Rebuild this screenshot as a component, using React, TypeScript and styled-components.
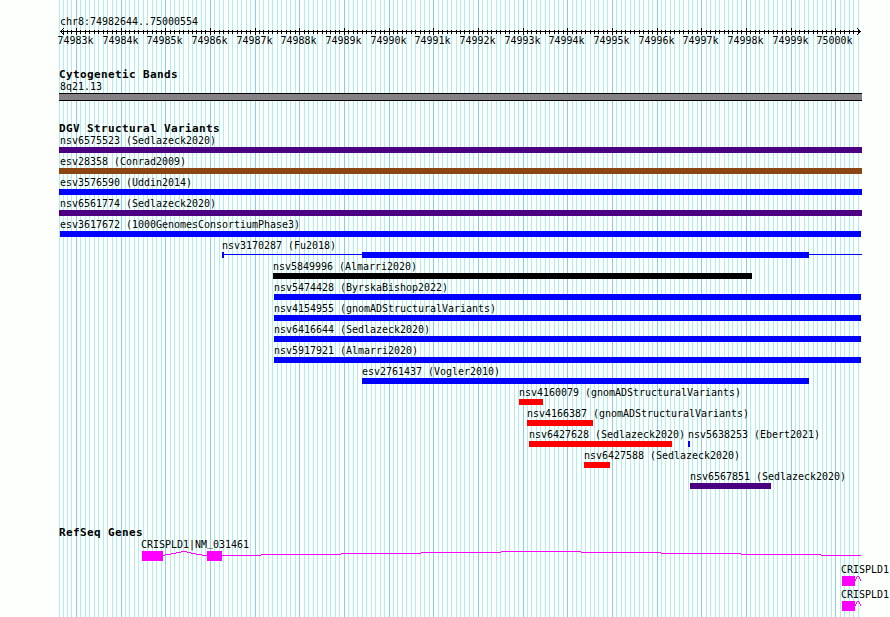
import styled, { createGlobalStyle } from "styled-components"

const START = 74982644
const END = 75000554
const LEFT = 60
const WIDTH = 800

const toX = (bp: number) => Math.max(59, Math.round(LEFT + (bp - START) * WIDTH / (END - START + 1)))

const ticks = Array.from({ length: 180 }, (_, i) => 74982600 + i * 100)
  .filter(bp => bp <= END)
  .map(bp => ({ bp, x: toX(bp), major: bp % 1000 === 0 }))

const color = {
  purple: "#4b0082",
  brown: "#8b4513",
  blue: "#0000ff",
  black: "#000000",
  red: "#ff0000",
  magenta: "#ff00ff",
}

const GlobalStyle = createGlobalStyle`
body {
  background: #fcfffc;
  margin: 0;
  overflow: hidden;
}
`

const Browser = styled.main`
color: #000;
display: flex;
flex-direction: column;
font-family: "DejaVu Sans Mono", monospace;
font-size: 11px;
height: 617px;
line-height: 12px;
overflow: hidden;
position: relative;
width: 890px;
`

const Grid = styled.svg`
height: 617px;
left: 0;
position: absolute;
top: 0;
width: 890px;
z-index: -1;
`

const Text = styled.span<{ $nudge?: number }>`
display: block;
height: 12px;
margin-left: ${props => props.$nudge ?? 0}px;
position: relative;
transform: scaleX(0.906);
transform-origin: 0 0;
white-space: pre;
width: max-content;
z-index: 1;
`

const Raised = styled.span`
position: relative;
top: -2px;
`

const Header = styled.header`
height: 49px;
padding: 16px 0 4px 60px;
`

const Axis = styled.svg`
display: block;
height: 21px;
margin-left: -60px;
width: 890px;
`

const Track = styled.section<{ $height: number }>`
flex: none;
height: ${props => props.$height}px;
`

const Title = styled.h2`
font-size: 11px;
font-weight: 700;
height: 12px;
letter-spacing: 0.38px;
line-height: 12px;
margin: 0 0 0 59px;
white-space: pre;
`

const Band = styled.div`
background: #848284;
border: solid #000;
border-width: 1px 0;
height: 6px;
margin-left: 59px;
width: 803px;
`

const BandLabel = styled.div`
padding-left: 60px;
`

const Row = styled.div`
display: flex;
height: 21px;
`

const Feature = styled.div<{ $indent: number; $width: number }>`
flex: none;
margin-left: ${props => props.$indent}px;
width: ${props => props.$width}px;
`

const Bar = styled.div<{ $color: string; $width?: number }>`
background: ${props => props.$color};
flex: none;
height: 6px;
width: ${props => props.$width ? `${props.$width}px` : "100%"};
`

const Segments = styled.div`
align-items: center;
display: flex;
`

const Connector = styled.div<{ $width: number }>`
background: ${color.blue};
flex: none;
height: 1px;
margin-bottom: 1px;
width: ${props => props.$width}px;
`

const Gene = styled.div<{ $indent: number }>`
height: 25px;
margin-left: ${props => props.$indent}px;
`

const GeneModel = styled.svg`
display: block;
height: 10px;
overflow: visible;
width: 720px;
`

type Variant = { name: string; from: number; to: number; fill: string; nudge?: number }

const rows: Variant[][] = [
  [{ name: "nsv6575523 (Sedlazeck2020)", from: 59, to: 862, fill: color.purple, nudge: 1 }],
  [{ name: "esv28358 (Conrad2009)", from: 59, to: 862, fill: color.brown, nudge: 1 }],
  [{ name: "esv3576590 (Uddin2014)", from: 59, to: 862, fill: color.blue, nudge: 1 }],
  [{ name: "nsv6561774 (Sedlazeck2020)", from: 59, to: 862, fill: color.purple, nudge: 1 }],
  [{ name: "esv3617672 (1000GenomesConsortiumPhase3)", from: 60, to: 861, fill: color.blue, nudge: 0 }],
  [{ name: "nsv3170287 (Fu2018)", from: 222, to: 862, fill: "segments" }],
  [{ name: "nsv5849996 (Almarri2020)", from: 273, to: 752, fill: color.black }],
  [{ name: "nsv5474428 (ByrskaBishop2022)", from: 274, to: 861, fill: color.blue }],
  [{ name: "nsv4154955 (gnomADStructuralVariants)", from: 274, to: 861, fill: color.blue }],
  [{ name: "nsv6416644 (Sedlazeck2020)", from: 274, to: 861, fill: color.blue }],
  [{ name: "nsv5917921 (Almarri2020)", from: 274, to: 861, fill: color.blue }],
  [{ name: "esv2761437 (Vogler2010)", from: 362, to: 809, fill: color.blue }],
  [{ name: "nsv4160079 (gnomADStructuralVariants)", from: 519, to: 543, fill: color.red }],
  [{ name: "nsv4166387 (gnomADStructuralVariants)", from: 527, to: 593, fill: color.red }],
  [
    { name: "nsv6427628 (Sedlazeck2020)", from: 529, to: 672, fill: color.red },
    { name: "nsv5638253 (Ebert2021)", from: 688, to: 690, fill: color.blue },
  ],
  [{ name: "nsv6427588 (Sedlazeck2020)", from: 584, to: 610, fill: color.red }],
  [{ name: "nsv6567851 (Sedlazeck2020)", from: 690, to: 771, fill: color.purple }],
]

// introns are drawn as one pixel steps [x, y, width], rising to the middle and falling again
const introns = [
  [21, 4, 2], [23, 3, 6], [29, 2, 5], [34, 1, 5], [39, 0, 6],
  [45, 1, 4], [49, 2, 5], [54, 3, 6], [60, 4, 5],
  [80, 4, 39], [119, 3, 80], [199, 2, 80], [279, 1, 80], [359, 0, 80],
  [439, 1, 80], [519, 2, 80], [599, 3, 80], [679, 4, 40],
]

const Ruler = () => <Axis viewBox="0 0 890 21" shapeRendering="crispEdges">
  <rect x="60" y="3" width="801" height="1" />
  <path d="M64.5 -0.5L60.5 3.5L64.5 7.5M856.5 -0.5L860.5 3.5L856.5 7.5" fill="none" stroke="#000" />
  {ticks.filter(({ x }) => x > 60).map(({ bp, x, major }) =>
    <rect key={bp} x={x} y={major ? 0 : 2} width="1" height={major ? 7 : 4} />
  )}
  {ticks.filter(({ major }) => major).map(({ bp, x }) =>
    <text key={bp} x={x - 18.5} y="16" textLength="36" lengthAdjust="spacingAndGlyphs">{`${bp / 1000}k`}</text>
  )}
</Axis>

const VariantRow = ({ variants }: { variants: Variant[] }) => <Row>
  {variants.map(({ name, from, to, fill, nudge = -0.5 }, i) =>
    <Feature key={name} $indent={from - (i ? variants[i - 1].to : 0)} $width={to - from}>
      <Text $nudge={nudge}>{name}</Text>
      {fill === "segments"
        ? <Segments>
          <Bar $color={color.blue} $width={2} />
          <Connector $width={138} />
          <Bar $color={color.blue} $width={447} />
          <Connector $width={53} />
        </Segments>
        : <Bar $color={fill} />}
    </Feature>
  )}
</Row>

const PartialGene = () => <Gene $indent={842}>
  <Text $nudge={-1}>CRISPLD1</Text>
  <GeneModel shapeRendering="crispEdges" fill={color.magenta}>
    <rect width="13" height="10" />
    <path d="M13 3h1v2h-1zM14 1h1v2h-1zM15 0h2v1h-2zM17 1h1v2h-1zM18 3h1v2h-1z" />
  </GeneModel>
</Gene>

const App = () => <>
  <GlobalStyle />
  <Browser>
    <Grid shapeRendering="crispEdges">
      {ticks.map(({ bp, x, major }) =>
        <rect key={bp} x={x} y="0" width="1" height="617" fill={major ? "#87ceeb" : "#afeeee"} />
      )}
    </Grid>
    <Header>
      <Text>chr8:74982644..75000554</Text>
      <Ruler />
    </Header>
    <Track $height={54}>
      <Title>Cytogenetic Bands</Title>
      <BandLabel><Text>8q21.13</Text></BandLabel>
      <Band />
    </Track>
    <Track $height={404}>
      <Title>DGV Structural Variants</Title>
      {rows.map(variants => <VariantRow key={variants[0].name} variants={variants} />)}
    </Track>
    <Track $height={90}>
      <Title>RefSeq Genes</Title>
      <Gene $indent={142}>
        <Text $nudge={-1}>CRISPLD1|NM<Raised>_</Raised>031461</Text>
        <GeneModel shapeRendering="crispEdges" fill={color.magenta}>
          <rect width="21" height="10" />
          <rect x="65" width="15" height="10" />
          {introns.map(([x, y, width]) =>
            <rect key={x} x={x} y={y} width={width} height="1" />
          )}
        </GeneModel>
      </Gene>
      <PartialGene />
      <PartialGene />
    </Track>
  </Browser>
</>

export default App
